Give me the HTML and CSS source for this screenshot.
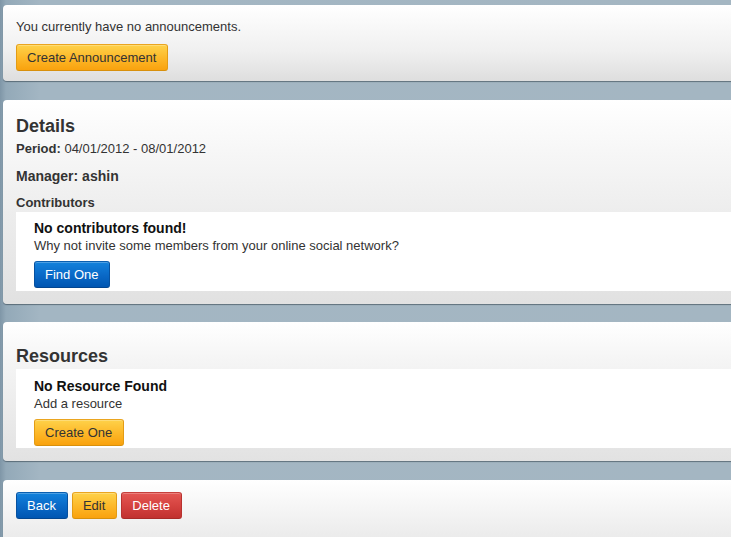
FILE: index.html
```html
<!DOCTYPE html>
<html>
<head>
<meta charset="utf-8">
<link rel="stylesheet" href="styles.css">
</head>
<body>
<div class="page">
  <section class="panel panel-announce">
    <p class="text">You currently have no announcements.</p>
    <button class="btn btn-orange">Create Announcement</button>
  </section>

  <section class="panel panel-details">
    <h2 class="title">Details</h2>
    <p class="text"><b>Period:</b> 04/01/2012 - 08/01/2012</p>
    <p class="manager">Manager: ashin</p>
    <p class="label">Contributors</p>
    <div class="well">
      <p class="well-title">No contributors found!</p>
      <p class="text">Why not invite some members from your online social network?</p>
      <button class="btn btn-blue">Find One</button>
    </div>
  </section>

  <section class="panel panel-resources">
    <h2 class="title">Resources</h2>
    <div class="well">
      <p class="well-title">No Resource Found</p>
      <p class="text">Add a resource</p>
      <button class="btn btn-orange">Create One</button>
    </div>
  </section>

  <section class="panel panel-actions">
    <div class="actions">
      <button class="btn btn-blue">Back</button>
      <button class="btn btn-orange">Edit</button>
      <button class="btn btn-red">Delete</button>
    </div>
  </section>
</div>
</body>
</html>
```

FILE: styles.css
```css
html, body {
  margin: 0;
  padding: 0;
  height: 100%;
  overflow: hidden;
}
body {
  background: linear-gradient(to right, #7f96a7 0px, #93a9b8 6px, #a3b6c3 40px, #a4b6c2 100%);
  font-family: "Liberation Sans", Arial, sans-serif;
  font-size: 13px;
  color: #333;
}
.page {
  padding-top: 5px;
  padding-left: 3px;
}
.panel {
  margin: 0 -20px 19px 0;
  padding: 0 13px;
  border-radius: 4px;
  background: linear-gradient(to bottom, #ffffff 0%, #f0f0f0 60%, #dedede 100%);
  box-shadow: 0 1px 1px rgba(40, 55, 65, 0.55);
}
.panel-announce {
  padding-top: 13px;
  padding-bottom: 10px;
}
.panel-details {
  padding-top: 15px;
  padding-bottom: 13px;
  margin-bottom: 18px;
  background: linear-gradient(to bottom, #ffffff 0%, #ededed 55%, #e1e1e1 100%);
}
.panel-resources {
  padding-top: 23px;
  padding-bottom: 13px;
  background: linear-gradient(to bottom, #ffffff 0%, #f4f4f4 30%, #e2e2e2 100%);
}
.panel-actions {
  padding-top: 12px;
  height: 60px;
  background: linear-gradient(to bottom, #ffffff 0%, #e6e6e6 100%);
}
p {
  margin: 0;
}
.text {
  line-height: 18px;
  font-size: 13px;
  color: #333;
}
.panel-announce .text {
  margin-bottom: 8px;
}
.title {
  margin: 0;
  font-size: 18px;
  line-height: 22px;
  font-weight: bold;
  color: #333;
}
.panel-details .title + .text {
  margin-top: 3px;
}
.manager {
  margin-top: 9px;
  font-size: 14px;
  font-weight: bold;
  line-height: 18px;
  color: #333;
}
.label {
  margin-top: 9px;
  font-size: 13px;
  font-weight: bold;
  line-height: 18px;
  color: #333;
}
.well {
  background: #fff;
  padding: 7px 0 3px 18px;
  margin-right: -13px;
}
.panel-resources .title {
  margin-bottom: 2px;
}
.panel-resources .well {
  padding-top: 8px;
  padding-bottom: 2px;
}
.well-title {
  font-size: 14px;
  font-weight: bold;
  line-height: 18px;
  color: #111;
}
.well .btn {
  margin-top: 6px;
}
.btn {
  display: inline-block;
  font-family: "Liberation Sans", Arial, sans-serif;
  font-size: 13px;
  line-height: 17px;
  padding: 4px 11px 4px 10px;
  border-radius: 3px;
  border: 1px solid;
  cursor: pointer;
  box-shadow: inset 0 1px 0 rgba(255, 255, 255, 0.25);
}
.btn-orange {
  color: #333;
  background: linear-gradient(to bottom, #fed24a 0%, #fdb92a 50%, #f9a20e 100%);
  border-color: #eaa520 #e39c14 #d8900c;
}
.btn-blue {
  color: #fff;
  background: linear-gradient(to bottom, #1282dc 0%, #0a6ac8 50%, #0056b2 100%);
  border-color: #0a5fb0 #0651a0 #034690;
}
.btn-red {
  color: #fff;
  background: linear-gradient(to bottom, #e45753 0%, #d54340 50%, #c1312f 100%);
  border-color: #c6403c #b8322f #a82a27;
}
.actions {
  display: flex;
  gap: 4px;
}
```
